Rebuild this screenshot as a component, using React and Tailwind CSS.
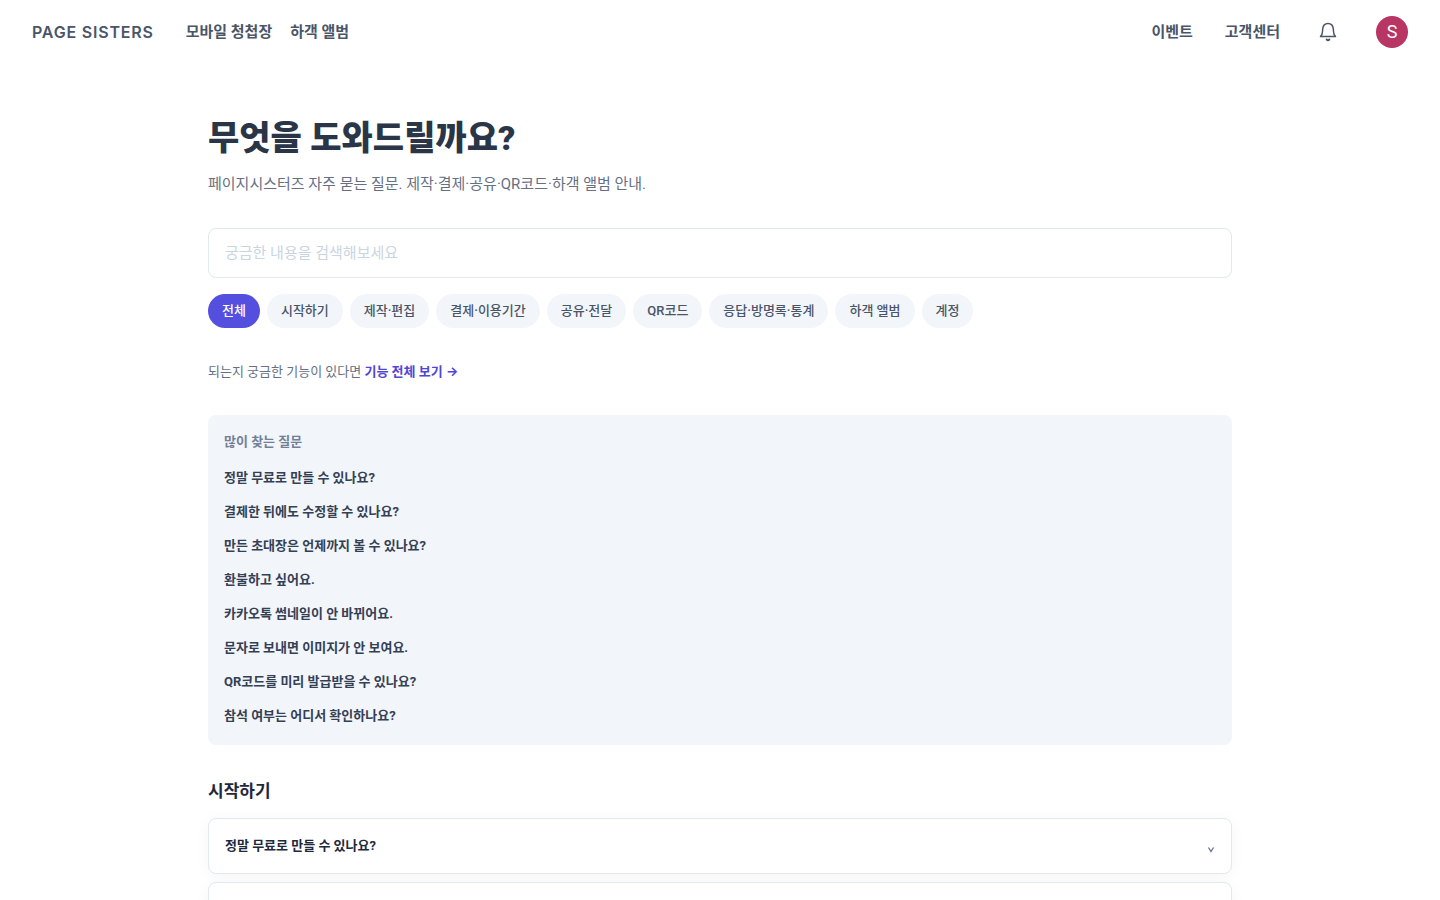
import React, { useState } from 'react';

const categories = [
    '전체',
    '시작하기',
    '제작·편집',
    '결제·이용기간',
    '공유·전달',
    'QR코드',
    '응답·방명록·통계',
    '하객 앨범',
    '계정',
];

const popularQuestions = [
    '정말 무료로 만들 수 있나요?',
    '결제한 뒤에도 수정할 수 있나요?',
    '만든 초대장은 언제까지 볼 수 있나요?',
    '환불하고 싶어요.',
    '카카오톡 썸네일이 안 바뀌어요.',
    '문자로 보내면 이미지가 안 보여요.',
    'QR코드를 미리 발급받을 수 있나요?',
    '참석 여부는 어디서 확인하나요?',
];

const startQuestions = ['정말 무료로 만들 수 있나요?', '결제한 뒤에도 수정할 수 있나요?'];

const BellIcon = () => (
    <svg className="h-6 w-6" viewBox="0 0 24 24" fill="none" stroke="currentColor" strokeWidth="1.5" strokeLinecap="round" strokeLinejoin="round" aria-hidden="true">
        <path d="M4.500 16.600h15c-1.400-1.300-1.900-3-2-5.100l-.2-2.500c-.3-3.300-2.300-5.400-5.300-5.400S7 5.700 6.700 9l-.2 2.500c-.1 2.100-.6 3.800-2 5.100Z" />
        <path d="M10.600 19.500c.8.800 2 .8 2.800 0" strokeWidth="1.800" />
    </svg>
);

const Header = () => (
    <header className="flex h-16 items-center justify-between px-8 text-[15px] font-bold text-[#4a5568]">
        <div className="flex items-center">
            <a href="#" className="font-['Inter',sans-serif] text-base font-semibold tracking-wider">PAGE SISTERS</a>
            <nav className="ml-8 flex items-center gap-[18px]">
                <a href="#">모바일 청첩장</a>
                <a href="#">하객 앨범</a>
            </nav>
        </div>
        <div className="flex items-center gap-8">
            <a href="#">이벤트</a>
            <a href="#">고객센터</a>
            <button type="button" aria-label="알림" className="flex h-8 w-8 items-center justify-center">
                <BellIcon />
            </button>
            <button type="button" className="flex h-8 w-8 items-center justify-center rounded-full bg-[#b83564] text-lg font-normal text-white">
                S
            </button>
        </div>
    </header>
);

const QuestionCard = ({ question }) => (
    <button type="button" className="flex h-14 w-full items-center justify-between rounded-lg border border-slate-200 bg-white px-4 text-left text-[13px] font-bold text-[#1e293b] shadow-[0_2px_16px_rgba(0,0,0,0.04)]">
        {question}
        <svg className="h-5 w-2 text-slate-500" viewBox="0 0 8 20" fill="none" stroke="currentColor" strokeWidth="1.3" aria-hidden="true">
            <path d="M1.500 11.500 4 15.500l2.500-4" />
        </svg>
    </button>
);

const App = () => {
    const [category, setCategory] = useState('전체');
    const [query, setQuery] = useState('');

    return (
        <div className="min-h-screen bg-white font-['Roboto','Noto_Sans_CJK_KR',sans-serif]">
            <Header />

            <main className="mx-auto max-w-5xl pt-12 pb-16">
                <h1 className="text-[34px] leading-[52px] font-black text-[#2a3547]">무엇을 도와드릴까요?</h1>
                <p className="mt-2 text-[15px] leading-6 text-[#667085]">
                    페이지시스터즈 자주 묻는 질문. 제작·결제·공유·QR코드·하객 앨범 안내.
                </p>

                {/* Search */}
                <input
                    type="search"
                    aria-label="질문 검색"
                    value={query}
                    onChange={(e) => setQuery(e.target.value)}
                    placeholder="궁금한 내용을 검색해보세요"
                    className="mt-8 block h-[50px] w-full rounded-lg border border-slate-200 px-4 text-[15px] text-slate-800 placeholder:text-slate-300"
                />

                {/* Categories */}
                <div className="mt-4 flex flex-wrap gap-[7px]">
                    {categories.map((name) => (
                        <button
                            key={name}
                            type="button"
                            onClick={() => setCategory(name)}
                            className={`h-[34px] rounded-full px-3.5 text-[13px] font-medium ${category === name ? 'bg-[#554fe0] text-white' : 'bg-[#f2f5fa] text-[#4a5568]'}`}
                        >
                            {name}
                        </button>
                    ))}
                </div>

                <p className="mt-8 text-[13px] leading-[22px] text-[#667085]">
                    되는지 궁금한 기능이 있다면{' '}
                    <a href="#" className="font-bold text-[#4f46d8]">
                        기능 전체 보기 <span className="font-['Inter',sans-serif]">→</span>
                    </a>
                </p>

                {/* Popular questions */}
                <section className="mt-8 rounded-lg bg-[#f2f5fa] px-4 pt-4 pb-3 text-[13px] leading-[22px] font-bold">
                    <h2 className="mb-2 text-[#718096]">많이 찾는 질문</h2>
                    <ul>
                        {popularQuestions.map((question) => (
                            <li key={question}>
                                <a href="#" className="block py-1.5 text-[#344054]">{question}</a>
                            </li>
                        ))}
                    </ul>
                </section>

                <section className="mt-8">
                    <h2 className="text-[17px] leading-[29px] font-bold text-[#1e293b]">시작하기</h2>
                    <div className="mt-3 flex flex-col gap-2">
                        {startQuestions.map((question) => (
                            <QuestionCard key={question} question={question} />
                        ))}
                    </div>
                </section>
            </main>
        </div>
    );
};

export default App;
